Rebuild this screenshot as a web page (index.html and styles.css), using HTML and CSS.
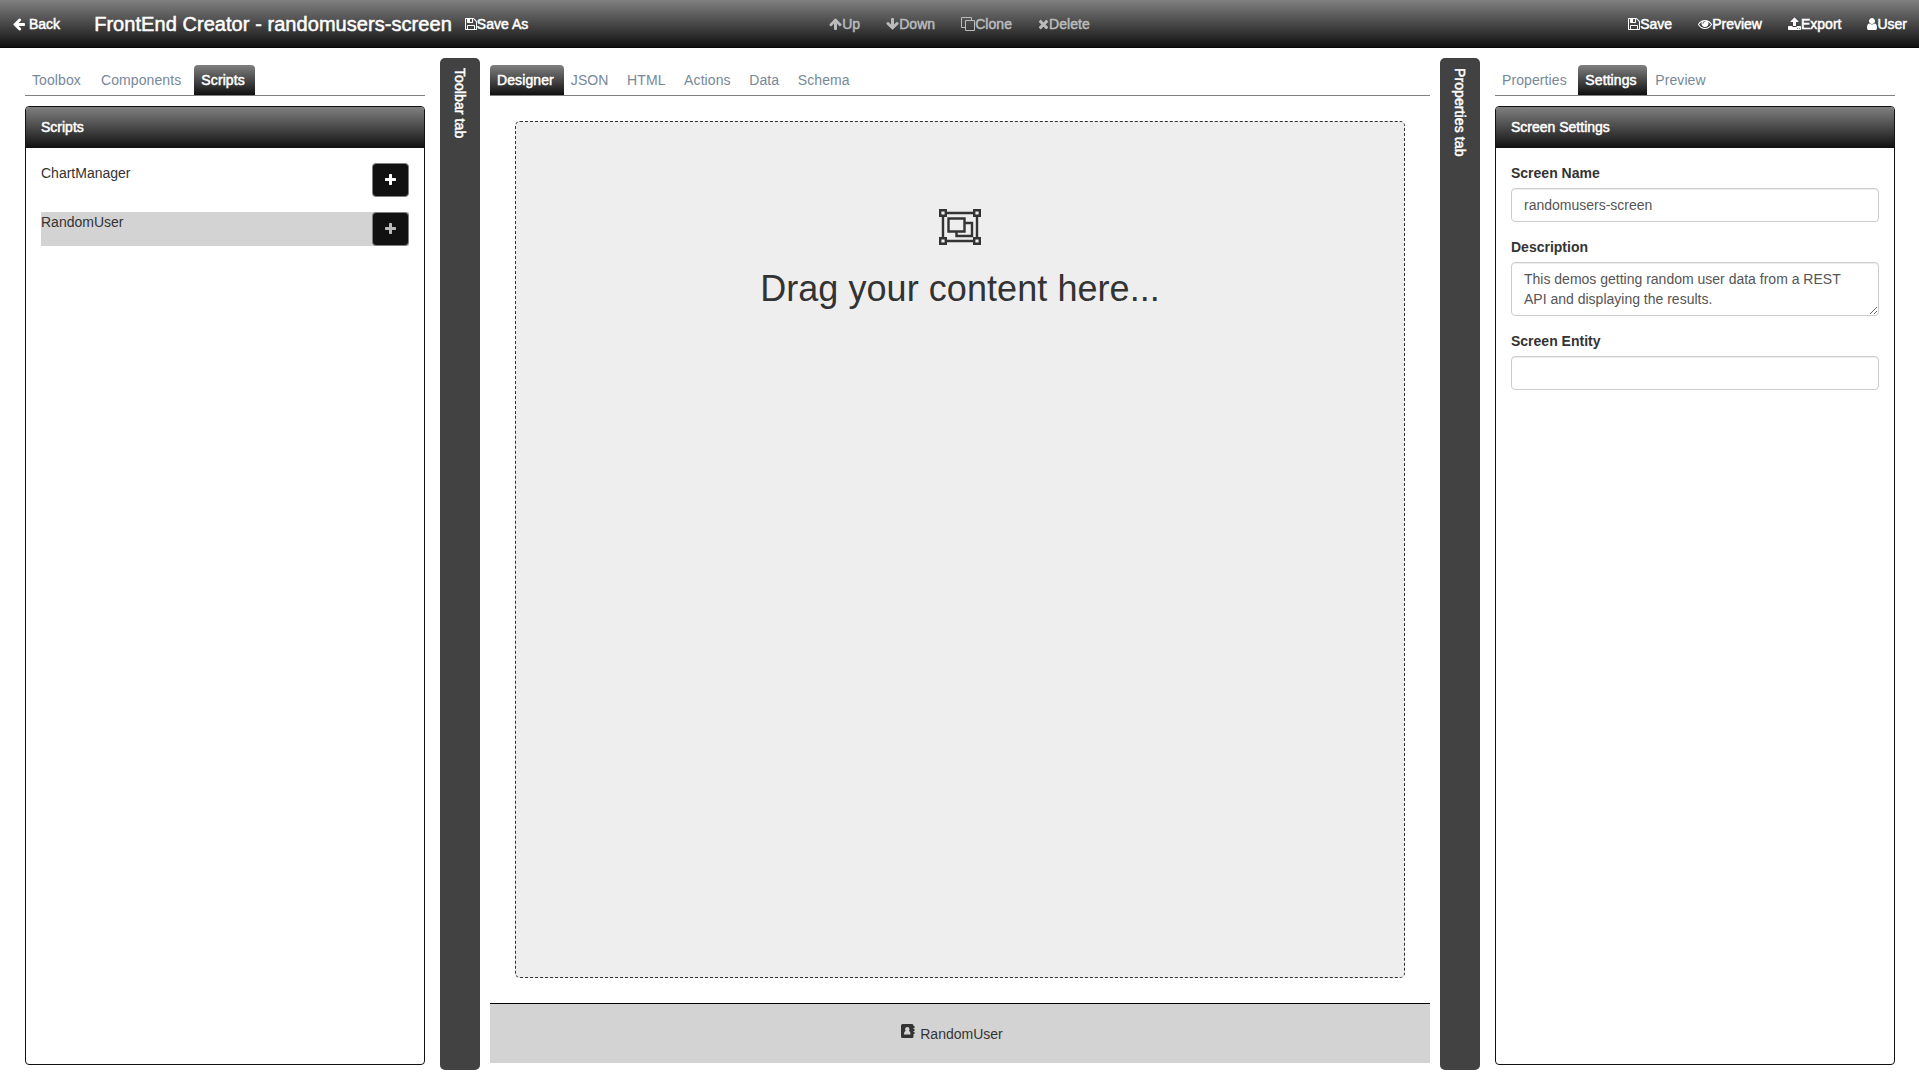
FILE: index.html
```html
<!DOCTYPE html>
<html lang="en">
<head>
<meta charset="utf-8">
<title>FrontEnd Creator</title>
<link rel="stylesheet" href="styles.css">
</head>
<body>
<svg class="defs" aria-hidden="true">
  <symbol id="floppy" viewBox="128 0 1536 1792"><path d="M512 1536h768v-384h-768v384zm896 0h128v-896q0-14-10-38.500t-20-34.500l-281-281q-10-10-34-20t-39-10v416q0 40-28 68t-68 28h-576q-40 0-68-28t-28-68v-416h-128v1280h128v-416q0-40 28-68t68-28h832q40 0 68 28t28 68v416zm-384-928v-320q0-13-9.500-22.500t-22.500-9.500h-192q-13 0-22.500 9.500t-9.500 22.500v320q0 13 9.500 22.500t22.500 9.500h192q13 0 22.500-9.500t9.500-22.500zm640 32v928q0 40-28 68t-68 28h-1344q-40 0-68-28t-28-68v-1344q0-40 28-68t68-28h928q40 0 88 20t76 48l280 280q28 28 48 76t20 88z"/></symbol>
  <symbol id="plus" viewBox="192 128 1408 1408"><path d="M1600 736v192q0 40-28 68t-68 28h-416v416q0 40-28 68t-68 28h-192q-40 0-68-28t-28-68v-416h-416q-40 0-68-28t-28-68v-192q0-40 28-68t68-28h416v-416q0-40 28-68t68-28h192q40 0 68 28t28 68v416h416q40 0 68 28t28 68z"/></symbol>
</svg>
<div class="page">
  <header class="navbar">
    <div class="nav-left">
      <a class="btn back"><svg class="icon w12" viewBox="128 0 1536 1792"><path d="M1664 896v128q0 53-32.500 90.500t-84.500 37.500h-704l293 294q38 36 38 90t-38 90l-75 76q-37 37-90 37-52 0-91-37l-651-652q-37-37-37-90 0-52 37-91l651-650q38-38 91-38 52 0 90 38l75 74q38 38 38 91t-38 91l-293 293h704q52 0 84.500 37.500t32.500 90.500z"/></svg>Back</a>
      <span class="brand">FrontEnd Creator - randomusers-screen</span>
      <a class="btn"><svg class="icon w12"><use href="#floppy"/></svg>Save As</a>
    </div>
    <div class="nav-center">
      <a class="btn"><svg class="icon w13" viewBox="64 0 1664 1792"><path d="M1675 971q0 51-37 90l-75 75q-38 38-91 38-54 0-90-38l-294-293v704q0 52-37.500 84.500t-90.500 32.500h-128q-53 0-90.500-32.500t-37.500-84.500v-704l-294 293q-36 38-90 38t-90-38l-75-75q-38-38-38-90 0-53 38-91l651-651q35-37 90-37 54 0 91 37l651 651q37 39 37 91z"/></svg>Up</a>
      <a class="btn"><svg class="icon w13" viewBox="64 0 1664 1792"><path d="M1675 832q0 53-37 90l-651 652q-39 37-91 37-53 0-90-37l-651-652q-38-36-38-90 0-53 38-91l74-75q39-37 91-37 53 0 90 37l294 294v-704q0-52 38-90t90-38h128q52 0 90 38t38 90v704l294-294q37-37 90-37 52 0 91 37l75 75q37 39 37 91z"/></svg>Down</a>
      <a class="btn"><svg class="icon w14 line" viewBox="0 0 14 14"><path d="M4.500 3.500h9v10h-9zM4 10.500H.5v-10h10v3"/></svg>Clone</a>
      <a class="btn"><svg class="icon w11" viewBox="192 0 1408 1792"><path d="M1490 1322q0 40-28 68l-136 136q-28 28-68 28t-68-28l-294-294-294 294q-28 28-68 28t-68-28l-136-136q-28-28-28-68t28-68l294-294-294-294q-28-28-28-68t28-68l136-136q28-28 68-28t68 28l294 294 294-294q28-28 68-28t68 28l136 136q28 28 28 68t-28 68l-294 294 294 294q28 28 28 68z"/></svg>Delete</a>
    </div>
    <div class="nav-right">
      <a class="btn"><svg class="icon w12"><use href="#floppy"/></svg>Save</a>
      <a class="btn"><svg class="icon w14" viewBox="0 0 1792 1792"><path d="M1664 960q-152-236-381-353 61 104 61 225 0 185-131.500 316.500t-316.500 131.500-316.500-131.500-131.500-316.500q0-121 61-225-229 117-381 353 133 205 333.500 326.500t434.500 121.500 434.500-121.500 333.500-326.500zm-720-384q0-20-14-34t-34-14q-125 0-214.500 89.500t-89.500 214.500q0 20 14 34t34 14 34-14 14-34q0-86 61-147t147-61q20 0 34-14t14-34zm848 384q0 34-20 69-140 230-376.500 368.500t-499.500 138.500-499.500-139-376.500-368q-20-35-20-69t20-69q140-229 376.500-368t499.500-139 499.500 139 376.500 368q20 35 20 69z"/></svg>Preview</a>
      <a class="btn"><svg class="icon w13" viewBox="64 0 1664 1792"><path d="M1344 1472q0-26-19-45t-45-19-45 19-19 45 19 45 45 19 45-19 19-45zm256 0q0-26-19-45t-45-19-45 19-19 45 19 45 45 19 45-19 19-45zm128-224v320q0 40-28 68t-68 28h-1472q-40 0-68-28t-28-68v-320q0-40 28-68t68-28h427q21 56 70.500 92t110.500 36h256q61 0 110.500-36t70.500-92h427q40 0 68 28t28 68zm-325-648q-17 40-59 40h-256v448q0 26-19 45t-45 19h-256q-26 0-45-19t-19-45v-448h-256q-42 0-59-40-17-39 14-69l448-448q18-19 45-19t45 19l448 448q31 30 14 69z"/></svg>Export</a>
      <a class="btn"><svg class="icon w10" viewBox="256 0 1280 1792"><path d="M1536 1399q0 109-62.500 187t-150.500 78h-854q-88 0-150.500-78t-62.500-187q0-85 8.500-160.500t31.500-152 58.500-131 94-89 134.500-34.500q131 128 313 128t313-128q76 0 134.500 34.500t94 89 58.500 131 31.500 152 8.500 160.500zm-256-887q0 159-112.500 271.500t-271.500 112.500-271.500-112.500-112.500-271.500 112.500-271.500 271.500-112.500 271.500 112.500 112.500 271.500z"/></svg>User</a>
    </div>
  </header>

  <main class="workspace">
    <section class="side">
      <nav class="tabs tools"><a>Toolbox</a><a>Components</a><a class="active">Scripts</a></nav>
      <div class="panel">
        <h2 class="panel-title">Scripts</h2>
        <div class="panel-body">
          <div class="script"><span>ChartManager</span><button class="add"><svg><use href="#plus"/></svg></button></div>
          <div class="script selected"><span>RandomUser</span><button class="add"><svg><use href="#plus"/></svg></button></div>
        </div>
      </div>
    </section>

    <div class="handle">Toolbar tab</div>

    <section class="center">
      <nav class="tabs views"><a class="active">Designer</a><a>JSON</a><a>HTML</a><a>Actions</a><a>Data</a><a>Schema</a></nav>
      <div class="canvas">
        <svg class="group-icon" viewBox="0 0 42 36"><path d="M7 4h28M7 32h28M4 7v22M38 7v22M1.200 1.200h5.600v5.600H1.200zM35.200 1.200h5.600v5.600h-5.600zM1.200 29.200h5.600v5.600H1.200zM35.200 29.200h5.600v5.600h-5.600zM9.500 9.500h16v13H9.500zM25.500 14h7.500v13H17.500v-4.500"/></svg>
        <h1>Drag your content here...</h1>
      </div>
      <footer class="dock">
        <svg class="book" viewBox="0 0 14 14"><path fill-rule="evenodd" d="M1.500 0h9.500q1.500 0 1.500 1.500v.5h1v2h-1v1h1v2h-1v1h1v2h-1v2.500q0 1.500-1.500 1.500h-9.500q-1.500 0-1.500-1.500v-11q0-1.500 1.500-1.500zM3 10.500h6.500q0-3.500-1.700-3.500.7-.7.7-1.700 0-2.200-2.200-2.200t-2.200 2.200q0 1 .7 1.700-1.800 0-1.800 3.500z"/></svg>
        <span>RandomUser</span>
      </footer>
    </section>

    <div class="handle">Properties tab</div>

    <section class="side">
      <nav class="tabs"><a>Properties</a><a class="active">Settings</a><a>Preview</a></nav>
      <div class="panel">
        <h2 class="panel-title">Screen Settings</h2>
        <form class="panel-body">
          <label for="name">Screen Name</label>
          <input id="name" value="randomusers-screen">
          <label for="desc">Description</label>
          <textarea id="desc">This demos getting random user data from a REST API and displaying the results.</textarea>
          <label for="entity">Screen Entity</label>
          <input id="entity">
        </form>
      </div>
    </section>
  </main>
</div>
</body>
</html>
```
FILE: styles.css
```css
* { box-sizing: border-box; }
body {
  margin: 0;
  font: 14px/20px "Liberation Sans", Arial, sans-serif;
  color: #333;
  background: #fff;
}
.defs { display: none; }
.page { height: 1079px; display: flex; flex-direction: column; overflow: hidden; }

.navbar {
  height: 48px;
  display: grid;
  grid-template-columns: 1fr auto 1fr;
  align-items: center;
  background: linear-gradient(#808080, #111);
  border-bottom: 1px solid #080808;
  color: #fff;
  -webkit-text-stroke: 0.5px currentColor;
}
.nav-left, .nav-center, .nav-right { display: flex; align-items: center; }
.nav-center { color: #bbb; letter-spacing: 0.05px; }
.nav-right { justify-content: flex-end; }
.btn { display: flex; align-items: center; padding: 0 13px; white-space: nowrap; }
.nav-right .btn:last-child { padding-right: 12px; }
.back { gap: 4px; }
.brand { font-size: 20px; margin-left: 21px; letter-spacing: 0.055px; }
.icon { height: 14px; fill: currentColor; stroke: none; }
.line { fill: none; stroke: currentColor; }
.w10 { width: 10px; }
.w11 { width: 11px; }
.w12 { width: 12px; }
.w13 { width: 13px; }
.w14 { width: 14px; }

.workspace {
  flex: 1;
  display: grid;
  grid-template-columns: 400px 40px 930px 40px 400px;
  column-gap: 15px;
  padding: 10px 24px 9px 25px;
}
.side, .center { display: flex; flex-direction: column; padding-top: 7px; }
.side { padding-bottom: 5px; }
/* The designer column reaches 5px into the gap on both sides */
.center { margin: 0 -5px; padding-bottom: 7px; }

.tabs {
  display: flex;
  height: 31px;
  border-bottom: 1px solid #808080;
  color: #778899;
  letter-spacing: 0.1px;
}
.tabs a { padding: 5px 10px 5px 7px; margin-right: 1.5px; }
.tools a { margin-right: 3px; }
.views .active { margin-right: 0; }
.tabs .active {
  color: #fff;
  background: linear-gradient(#808080, #111);
  border-radius: 4px 4px 0 0;
  -webkit-text-stroke: 0.5px currentColor;
}

.panel { flex: 1; margin-top: 10px; border: 1px solid #111; border-radius: 4px; overflow: hidden; }
.panel-title {
  margin: 0;
  height: 41px;
  padding: 10px 15px;
  font: inherit;
  color: #fff;
  background: linear-gradient(#808080, #111);
  -webkit-text-stroke: 0.5px currentColor;
}
.panel-body { padding: 15px; }
.script { display: flex; justify-content: space-between; height: 34px; margin-bottom: 15px; }
.selected { background: #d3d3d3; }
.add {
  width: 37px;
  padding: 0 0 1px;
  display: flex;
  align-items: center;
  justify-content: center;
  color: #fff;
  background: #111;
  border: 1px solid #808080;
  border-radius: 4px;
}
.selected .add { color: #bbb; }
.add svg { width: 11px; height: 11px; fill: currentColor; }

.handle {
  writing-mode: vertical-rl;
  padding: 10px;
  color: #fff;
  background: #424242;
  border-radius: 5px;
  letter-spacing: 0.1px;
  -webkit-text-stroke: 0.5px currentColor;
}

.canvas {
  flex: 1;
  margin: 25px;
  display: flex;
  flex-direction: column;
  align-items: center;
  padding-top: 87px;
  background: #eee;
  border: 1px dashed #333;
  border-radius: 5px;
}
.group-icon { width: 42px; height: 36px; fill: none; stroke: #333; stroke-width: 2.400; }
.canvas h1 { margin: 24px 0 0; font-size: 36px; line-height: 40px; font-weight: 400; letter-spacing: 0.06px; }
.dock {
  height: 60px;
  display: flex;
  justify-content: center;
  align-items: center;
  gap: 5px;
  padding-right: 16px;
  background: #d3d3d3;
  border-top: 1px solid #000;
}
.book { width: 14px; height: 14px; fill: #333; margin-bottom: 5px; }

label { display: block; margin-bottom: 5px; font-weight: 700; }
input, textarea {
  display: block;
  width: 100%;
  height: 34px;
  margin: 0 0 15px;
  padding: 6px 12px;
  font: inherit;
  color: #555;
  background: #fff;
  border: 1px solid #ccc;
  border-radius: 4px;
  box-shadow: inset 0 1px 1px rgba(0, 0, 0, 0.075);
}
textarea { height: 54px; }
```
